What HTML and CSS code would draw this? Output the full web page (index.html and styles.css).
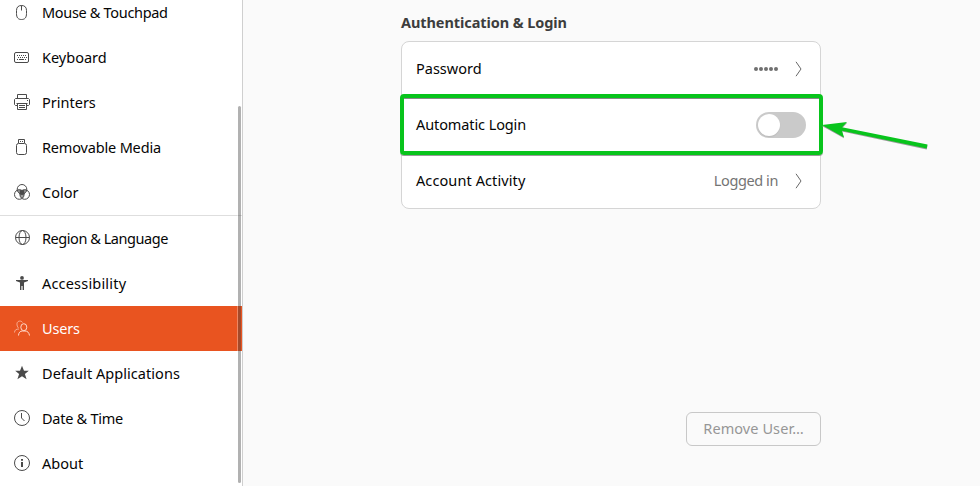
FILE: index.html
```html
<!DOCTYPE html>
<html lang="en">
<head>
<meta charset="utf-8">
<title>Settings</title>
<link rel="stylesheet" href="styles.css">
</head>
<body>
<div class="window">
  <nav class="sidebar">
    <a class="item"><svg class="icon" viewBox="0 0 16 16"><path d="M2.500 6.500C2.500 3 4.500 1.500 7.500 1.500S12.500 3 12.500 6.500v3c0 4-1.500 6-5 6s-5-2-5-6zM7.500 1.500v5"/></svg><span class="t-mouse">Mouse &amp; Touchpad</span></a>
    <a class="item"><svg class="icon" viewBox="0 0 16 16"><rect x=".5" y="3.500" width="14" height="10" rx="1.500"/><path d="M3 6.500h10M4 8.500h9" stroke-dasharray="1 1"/><path d="M3 10.500h1M5 10.500h5M11 10.500h1"/></svg><span>Keyboard</span></a>
    <a class="item"><svg class="icon" viewBox="0 0 16 16"><path d="M3.500 4V.5h9V4M3 11.500H1.500l-1-1v-5l1-1h13l1 1v5l-1 1H13M3.500 9v6.500h9V9M2.500 9.500h11M5 11.500h6M5 13.500h6M13 6.500h1"/></svg><span>Printers</span></a>
    <a class="item"><svg class="icon" viewBox="0 0 16 16"><rect x="2.500" y="4.500" width="10" height="11" rx="2"/><path d="M4.500 4V.5h6V4M6 2.500h1M8 2.500h1"/></svg><span class="t-media">Removable Media</span></a>
    <a class="item"><svg class="icon" viewBox="0 0 16 16"><path class="solid" d="M3.300 5.800a5 5 0 0 1 4.700 0.500 5 5 0 0 1 4.700-.5 5 5 0 0 1-2.500 4.200A5 5 0 0 1 8 14.500 5 5 0 0 1 5.800 10 5 5 0 0 1 3.300 5.800z" opacity=".55"/><path class="solid" d="M5.800 6l2.200.6L10.200 6v4.200L8 10.900l-2.200-.7z"/><circle cx="8" cy="5.300" r="4.800"/><circle cx="5.300" cy="10.500" r="4.800"/><circle cx="10.700" cy="10.500" r="4.800"/></svg><span>Color</span></a>
    <hr class="divider">
    <a class="item"><svg class="icon" viewBox="0 0 16 16"><circle cx="8.500" cy="7.500" r="7"/><ellipse cx="8.500" cy="7.500" rx="3.500" ry="7"/><path d="M1.500 7.500h14"/></svg><span class="t-region">Region &amp; Language</span></a>
    <a class="item"><svg class="icon" viewBox="0 0 16 16"><circle class="solid" cx="8" cy="2.900" r="1.900"/><path class="solid" d="M2 5h12v1l-4 1.500V15H8.600v-4H7.400v4H6V7.500L2 6z"/></svg><span class="t-access">Accessibility</span></a>
    <a class="item selected"><svg class="icon" viewBox="0 0 16 16"><path d="M4.500 15.500c.2-3 1.600-4.500 4-4.500h2.500c2.500 0 4 1.500 4.500 4.500"/><ellipse cx="9.800" cy="7.200" rx="3" ry="3.500"/><path opacity=".65" d="M8.500 2.500C7.500.5 3.500.4 3 3.500c-.2 2 .6 3.500 1.500 4.500M.5 12.500C.7 10 2 9 5 9"/></svg><span class="t-users">Users</span></a>
    <a class="item"><svg class="icon" viewBox="0 0 16 16"><path class="solid" d="M8 .8l2 5h4.800l-3.900 3.300 1.700 5.200L8 11.200l-4.600 3.100 1.700-5.200L1.200 5.800H6z"/></svg><span class="t-default">Default Applications</span></a>
    <a class="item"><svg class="icon" viewBox="0 0 16 16"><circle cx="8" cy="8" r="7.500"/><path d="M7.500 3v5l3 3"/></svg><span class="t-date">Date &amp; Time</span></a>
    <a class="item"><svg class="icon" viewBox="0 0 16 16"><circle cx="8" cy="8" r="7.500"/><path class="solid" d="M7 4h2v1.700H7zM7 7h2v5H7z"/></svg><span>About</span></a>
    <div class="scrollbar"></div>
  </nav>
  <main class="content">
    <h2>Authentication &amp; Login</h2>
    <section class="card">
      <div class="row"><span>Password</span><span class="dots"><i></i><i></i><i></i><i></i><i></i></span><svg class="chevron" viewBox="0 0 8 16"><path d="M1 .8L6 8l-5 7.200"/></svg></div>
      <div class="row"><span class="t-auto">Automatic Login</span><span class="switch"></span></div>
      <div class="row"><span class="t-activity">Account Activity</span><span class="value">Logged in</span><svg class="chevron" viewBox="0 0 8 16"><path d="M1 .8L6 8l-5 7.200"/></svg></div>
      <div class="highlight"></div>
      <svg class="arrow" viewBox="0 0 110 40"><g class="arrow-shadow"><path d="M0 15l25-3-5 5.200 85.500 17.300-.8 4L20 20.600l2 6.700z"/></g><path d="M0 14l25-3-5 5.200 85.500 17.300-.8 4L20 19.800l2 6.700z"/></svg>
    </section>
    <button class="remove" disabled>Remove User…</button>
  </main>
</div>
</body>
</html>
```
FILE: styles.css
```css
* { box-sizing: border-box; }
body {
  margin: 0;
  height: 486px;
  overflow: hidden;
  background: #fafafa;
  color: #050505;
  font: 14.5px/20px "Noto Sans", sans-serif;
}
.window { display: flex; height: 486px; }
.sidebar {
  position: relative;
  flex: none;
  width: 243px;
  height: 496px;
  margin-top: -10px;
  background: #fff;
  border-right: 1px solid #cfcfcf;
}
.item {
  display: flex;
  align-items: center;
  gap: 12px;
  height: 45px;
  padding: 0 0 1px 14px;
  white-space: nowrap;
}
.icon {
  width: 16px;
  height: 16px;
  flex: none;
  fill: none;
  stroke: #4a4a4a;
  stroke-width: 1;
}
.icon .solid { fill: #4a4a4a; stroke: none; }
.divider { height: 1px; margin: 0; border: 0; background: #dedede; }
.selected { background: #e95420; color: #fff; }
.selected .icon { stroke: #ffd8c9; }
.scrollbar {
  position: absolute;
  right: 1px;
  top: 116px;
  width: 3px;
  height: 377px;
  border-radius: 2px;
  background: rgba(60, 60, 60, .4);
  box-shadow: -1px 0 rgba(255, 255, 255, .3);
}

/* Label tracking */
.t-mouse { letter-spacing: -.32px; }
.t-media { letter-spacing: -.17px; }
.t-region { letter-spacing: -.45px; }
.t-access { letter-spacing: .19px; }
.t-users { letter-spacing: -.15px; }
.t-default { letter-spacing: .05px; }
.t-date { letter-spacing: -.27px; }
.t-auto { letter-spacing: -.1px; }
.t-activity { letter-spacing: .1px; }

.content {
  display: flex;
  flex-direction: column;
  width: 578px;
  padding: 12px 0 0 158px;
}
h2 {
  margin: 0 0 9px;
  color: #3d3d3d;
  font-size: 14.5px;
  line-height: 20px;
  letter-spacing: -.08px;
}
.card {
  position: relative;
  width: 420px;
  height: 168px;
  background: #fff;
  border: 1px solid #d5d5d5;
  border-radius: 8px;
}
.row {
  display: flex;
  align-items: center;
  height: 56px;
  padding: 0 14px;
}
.row:first-child { height: 55px; padding-bottom: 1px; }
.row > span:first-child { margin-right: auto; padding-bottom: 2px; }
.value { padding-bottom: 2px; color: #747474; letter-spacing: -.4px; }
.dots { display: flex; gap: 1px; }
.dots i { width: 4px; height: 4px; border-radius: 50%; background: #707070; }
.chevron {
  width: 8px;
  height: 16px;
  margin: 0 3px 0 17px;
  fill: none;
  stroke: #686868;
}
.switch {
  display: flex;
  align-items: center;
  width: 50px;
  height: 26px;
  padding: 2px;
  border-radius: 13px;
  background: #cacaca;
}
.switch::before {
  content: "";
  width: 22px;
  height: 22px;
  border-radius: 50%;
  background: #fff;
  box-shadow: 0 1px 1px #bbb;
}
.highlight {
  position: absolute;
  left: -2px;
  top: 52px;
  width: 423px;
  height: 61px;
  border: 4px solid #08c41c;
  border-radius: 4px;
  box-shadow: inset 0 1px #888, 0 1px #9a9a9a;
}
.arrow {
  position: absolute;
  left: 420px;
  top: 69px;
  width: 110px;
  height: 40px;
  fill: #08c41c;
}
.arrow-shadow { fill: #9a9a9a; }
.remove {
  align-self: flex-end;
  width: 135px;
  height: 34px;
  margin-top: 203px;
  padding: 0 0 2px;
  border: 1px solid #c8c8c8;
  border-radius: 6px;
  background: #fafafa;
  color: #969696;
  font: inherit;
  letter-spacing: .08px;
}
```
